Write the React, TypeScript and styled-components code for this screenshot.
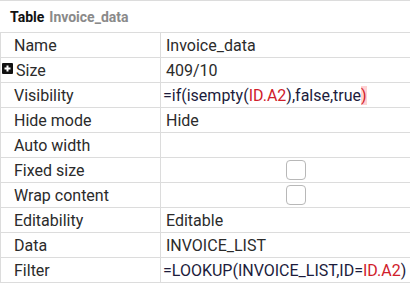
import React from 'react'
import styled, {createGlobalStyle} from 'styled-components'

const Global = createGlobalStyle`
  body{
    margin: 0;
    background: #fff;
    overflow: hidden;
    font-family: Roboto, "Liberation Sans", sans-serif;
  }
`

const Panel = styled.div`
  width: 430px;
  border-top: 1px solid #dcdcdc;
`

const Header = styled.div`
  height: 31px;
  display: flex;
  align-items: center;
  padding-left: 10px;
  font-size: 14px;
  font-weight: 700;
  color: #111;
  border-bottom: 1px solid #dcdcdc;
  span{
    color: #8a8a8a;
    margin-left: 5px;
  }
`

const Grid = styled.div`
  display: grid;
  grid-template-columns: 160px 1fr;
  border-left: 1px solid #dcdcdc;
`

const Label = styled.div<{$indent?: boolean}>`
  height: 24px;
  display: flex;
  align-items: center;
  padding-left: ${p => p.$indent ? '15px' : '13px'};
  font-size: 16px;
  color: #2b2b2b;
  border-bottom: 1px solid #dcdcdc;
  border-right: 1px solid #dcdcdc;
  position: relative;
`

const Value = styled.div<{$formula?: boolean; $center?: boolean}>`
  height: 24px;
  display: flex;
  align-items: center;
  justify-content: ${p => p.$center ? 'center' : 'flex-start'};
  padding-left: ${p => p.$center ? '0' : p.$formula ? '2px' : '5px'};
  font-size: 16px;
  color: ${p => p.$formula ? '#1c1c3c' : '#2b2b2b'};
  border-bottom: 1px solid #dcdcdc;
  white-space: nowrap;
`

const Ref = styled.span`
  color: #d0202a;
`

const Bracket = styled.span`
  color: #d0202a;
  background: #ffd2d2;
`

const Expand = styled.span`
  position: absolute;
  left: 1px;
  top: 5px;
  width: 11px;
  height: 11px;
  background: #111;
  border-radius: 1px;
  display: flex;
  align-items: center;
  justify-content: center;
`

const Check = styled.span`
  width: 18px;
  height: 18px;
  border: 1px solid #b8b8b8;
  border-radius: 4px;
  background: #fff;
`

const PlusIcon = () => (
  <svg width="9" height="9" viewBox="0 0 9 9">
    <path d="M4.5 1.5v6M1.5 4.5h6" stroke="#fff" strokeWidth="2"/>
  </svg>
)

const App: React.FC = () => (
  <>
    <Global/>
    <Panel>
      <Header>Table<span>Invoice_data</span></Header>
      <Grid>
        <Label>Name</Label>
        <Value>Invoice_data</Value>

        <Label $indent><Expand><PlusIcon/></Expand>Size</Label>
        <Value>409/10</Value>

        <Label>Visibility</Label>
        <Value $formula>=if(isempty(<Ref>ID.A2</Ref>),false,true<Bracket>)</Bracket></Value>

        <Label>Hide mode</Label>
        <Value>Hide</Value>

        <Label>Auto width</Label>
        <Value></Value>

        <Label>Fixed size</Label>
        <Value $center><Check/></Value>

        <Label>Wrap content</Label>
        <Value $center><Check/></Value>

        <Label>Editability</Label>
        <Value>Editable</Value>

        <Label>Data</Label>
        <Value>INVOICE_LIST</Value>

        <Label>Filter</Label>
        <Value $formula>=LOOKUP(INVOICE_LIST,ID=<Ref>ID.A2</Ref>)</Value>
      </Grid>
    </Panel>
  </>
)

export default App
